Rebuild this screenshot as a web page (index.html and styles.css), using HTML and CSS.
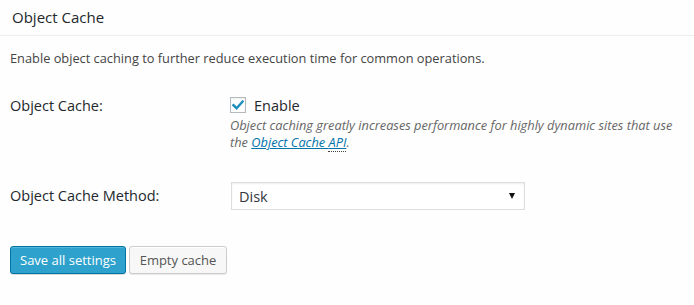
FILE: index.html
```html
<!DOCTYPE html>
<html>
<head>
<meta charset="utf-8">
<link rel="stylesheet" href="styles.css">
</head>
<body>
<div class="panel">
  <h3 class="panel-title">Object Cache</h3>
  <div class="panel-body">
    <p class="intro">Enable object caching to further reduce execution time for common operations.</p>
    <div class="form">
      <div class="row row-cache">
        <div class="label">Object Cache:</div>
        <div class="field">
          <label class="check">
            <span class="box"><svg width="12" height="10" viewBox="0 0 12 10"><path d="M1.5 5.2 L4.6 8.2 L10.6 1.6" fill="none" stroke="#1e8cbe" stroke-width="2.4" stroke-linecap="square"/></svg></span>
            <span class="check-text">Enable</span>
          </label>
          <p class="desc">Object caching greatly increases performance for highly dynamic sites that use the <a href="#" class="link">Object Cache <span class="abbr">API</span></a>.</p>
        </div>
      </div>
      <div class="row row-method">
        <div class="label">Object Cache Method:</div>
        <div class="field">
          <div class="select"><span>Disk</span><span class="arrow"></span></div>
        </div>
      </div>
    </div>
    <div class="actions">
      <button class="btn btn-primary">Save all settings</button>
      <button class="btn btn-secondary">Empty cache</button>
    </div>
  </div>
</div>
</body>
</html>
```
FILE: styles.css
```css
html, body {
  margin: 0;
  padding: 0;
  background: #fefefe;
}
body {
  font-family: "Open Sans", "Liberation Sans", sans-serif;
  color: #444;
  width: 694px;
  height: 305px;
  overflow: hidden;
}
.panel-title {
  margin: 0;
  padding: 7px 12px 8px;
  font-size: 15px;
  font-weight: 400;
  line-height: 20px;
  color: #23282d;
  border-bottom: 1px solid #eeeeee;
}
.panel-body {
  padding: 0 10px;
}
.intro {
  margin: 0;
  padding-top: 13px;
  font-size: 12.8px;
  line-height: 19px;
  color: #444;
}
.form {
  padding-top: 12px;
}
.row {
  display: flex;
}
.label {
  width: 220px;
  flex: none;
  font-size: 14.5px;
  line-height: 20px;
  color: #23282d;
}
.row-cache .label {
  padding-top: 16px;
}
.row-cache .field {
  padding-top: 15px;
}
.check {
  display: flex;
  align-items: center;
  height: 20px;
}
.box {
  width: 14px;
  height: 14px;
  border: 1px solid #b4b9be;
  background: #fff;
  box-shadow: inset 0 1px 2px rgba(0,0,0,0.07);
  display: flex;
  align-items: center;
  justify-content: center;
}
.check-text {
  margin-left: 8px;
  font-size: 14.5px;
  color: #23282d;
}
.desc {
  margin: 2px 0 0;
  font-size: 12.8px;
  font-style: italic;
  line-height: 17px;
  color: #666;
}
.link {
  color: #0073aa;
  text-decoration: underline;
}
.abbr {
  border-bottom: 1px dotted #444;
}
.row-method {
  padding-top: 31px;
}
.row-method .label {
  padding-top: 4px;
}
.row-method .field {
  padding-left: 1px;
}
.select {
  width: 277px;
  height: 26px;
  border: 1px solid #dddddd;
  background: #fff;
  box-shadow: inset 0 1px 2px rgba(0,0,0,0.07);
  display: flex;
  align-items: center;
  justify-content: space-between;
  padding: 0 8px 0 7px;
  font-size: 14.5px;
  color: #32373c;
}
.arrow {
  width: 0;
  height: 0;
  margin-right: 1px;
  border-left: 3.5px solid transparent;
  border-right: 3.5px solid transparent;
  border-top: 6px solid #111;
}
.actions {
  display: flex;
  gap: 3px;
  padding-top: 36px;
}
.btn {
  box-sizing: border-box;
  height: 28px;
  border-radius: 3px;
  font-family: "Open Sans", "Liberation Sans", sans-serif;
  font-size: 13px;
  line-height: 26px;
  padding: 0 0 1px;
  margin: 0;
  white-space: nowrap;
  text-align: center;
  cursor: pointer;
}
.btn-primary {
  width: 116px;
  background: #2ea2cc;
  border: 1px solid #0074a2;
  box-shadow: inset 0 1px 0 rgba(120,200,230,0.5), 0 1px 0 rgba(0,0,0,0.15);
  color: #fff;
}
.btn-secondary {
  width: 98px;
  background: #f7f7f7;
  border: 1px solid #cccccc;
  box-shadow: inset 0 1px 0 #fff, 0 1px 0 rgba(0,0,0,0.08);
  color: #555;
}
```
